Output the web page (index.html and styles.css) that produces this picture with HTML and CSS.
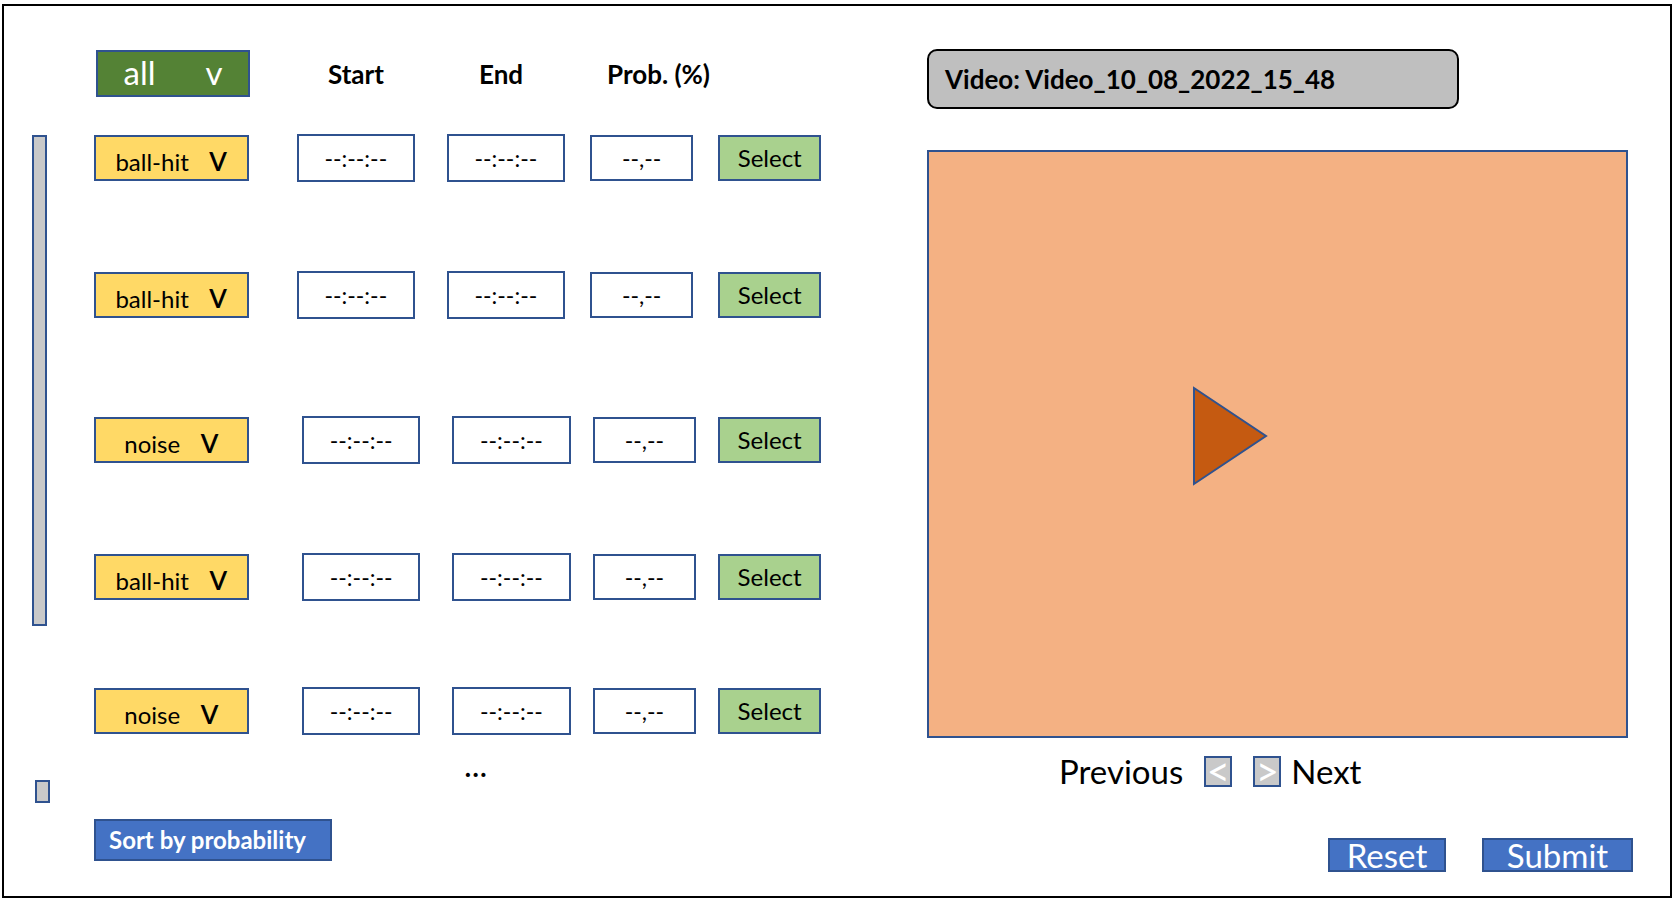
FILE: index.html
```html
<!DOCTYPE html>
<html lang="en">
<head>
<meta charset="utf-8">
<meta name="viewport" content="width=device-width, initial-scale=1">
<title>Video event review</title>
<link rel="stylesheet" href="styles.css">
</head>
<body>
<main class="frame">
  <div class="rail" aria-hidden="true">
    <div class="rail-thumb"></div>
    <div class="rail-end"></div>
  </div>

  <section class="events" aria-label="Detected events">
    <div class="events-head">
      <label class="picker picker-all"><select class="picker-select" aria-label="Event filter"><option selected>all</option><option>ball-hit</option><option>noise</option></select><span class="picker-arrow">v</span></label>
      <span class="head-start">Start</span>
      <span class="head-end">End</span>
      <span class="head-prob">Prob. (%)</span>
    </div>

    <div class="event-list">
      <div class="event">
        <label class="picker"><select class="picker-select" aria-label="Event type 1"><option selected>ball-hit</option><option>noise</option></select><span class="picker-arrow">v</span></label>
        <input class="field time" type="text" value="--:--:--" aria-label="Start 1">
        <input class="field time" type="text" value="--:--:--" aria-label="End 1">
        <input class="field prob" type="text" value="--,--" aria-label="Probability 1">
        <button class="select-button" type="button">Select</button>
      </div>
      <div class="event">
        <label class="picker"><select class="picker-select" aria-label="Event type 2"><option selected>ball-hit</option><option>noise</option></select><span class="picker-arrow">v</span></label>
        <input class="field time" type="text" value="--:--:--" aria-label="Start 2">
        <input class="field time" type="text" value="--:--:--" aria-label="End 2">
        <input class="field prob" type="text" value="--,--" aria-label="Probability 2">
        <button class="select-button" type="button">Select</button>
      </div>
      <div class="event event-shifted">
        <label class="picker"><select class="picker-select" aria-label="Event type 3"><option>ball-hit</option><option selected>noise</option></select><span class="picker-arrow">v</span></label>
        <input class="field time" type="text" value="--:--:--" aria-label="Start 3">
        <input class="field time" type="text" value="--:--:--" aria-label="End 3">
        <input class="field prob" type="text" value="--,--" aria-label="Probability 3">
        <button class="select-button" type="button">Select</button>
      </div>
      <div class="event event-shifted">
        <label class="picker"><select class="picker-select" aria-label="Event type 4"><option selected>ball-hit</option><option>noise</option></select><span class="picker-arrow">v</span></label>
        <input class="field time" type="text" value="--:--:--" aria-label="Start 4">
        <input class="field time" type="text" value="--:--:--" aria-label="End 4">
        <input class="field prob" type="text" value="--,--" aria-label="Probability 4">
        <button class="select-button" type="button">Select</button>
      </div>
      <div class="event event-shifted">
        <label class="picker"><select class="picker-select" aria-label="Event type 5"><option>ball-hit</option><option selected>noise</option></select><span class="picker-arrow">v</span></label>
        <input class="field time" type="text" value="--:--:--" aria-label="Start 5">
        <input class="field time" type="text" value="--:--:--" aria-label="End 5">
        <input class="field prob" type="text" value="--,--" aria-label="Probability 5">
        <button class="select-button" type="button">Select</button>
      </div>
    </div>

    <p class="more">...</p>
    <button class="sort-button" type="button">Sort by probability</button>
  </section>

  <section class="viewer" aria-label="Video">
    <h1 class="video-title">Video: Video_10_08_2022_15_48</h1>
    <div class="video">
      <button class="play" type="button" aria-label="Play">
        <svg class="play-icon" viewBox="0 0 76 100" aria-hidden="true"><path d="M2 2 L74 50 L2 98 Z"/></svg>
      </button>
    </div>
    <div class="pager">
      <label for="previous">Previous</label>
      <button class="step" id="previous" type="button">&lt;</button>
      <button class="step" id="next" type="button">&gt;</button>
      <label for="next">Next</label>
    </div>
    <div class="actions">
      <button class="action action-reset" type="button">Reset</button>
      <button class="action action-submit" type="button">Submit</button>
    </div>
  </section>
</main>
</body>
</html>
```
FILE: styles.css
```css
:root {
  --line: #2f528f;
  --blue: #4472c4;
  --grey: #c9c9c9;
}

* {
  box-sizing: border-box;
}

body {
  margin: 0;
  padding: 4px 3px 5px 2px;
  background: #fff;
  color: #000;
  font: 24px/28px Lato, Carlito, Calibri, sans-serif;
}

button,
input,
select {
  margin: 0;
  padding: 0;
  border-radius: 0;
  color: inherit;
  font: inherit;
}

.frame {
  display: grid;
  grid-template-columns: 62px minmax(0, 727fr) 106px minmax(0, 706fr);
  min-height: calc(100vh - 9px);
  padding: 0 37px 0 28px;
  border: 2px solid #000;
}

/* Scroll rail */
.rail {
  padding-top: 129px;
}

.rail-thumb,
.rail-end {
  width: 15px;
  border: 2px solid var(--line);
  background: var(--grey);
}

.rail-thumb {
  height: 491px;
}

.rail-end {
  height: 23px;
  margin: 154px 0 0 3px;
}

/* Event list */
.events {
  display: flex;
  flex-direction: column;
  align-items: stretch;
  padding-top: 44px;
}

.events-head {
  display: grid;
  grid-template-columns: 156fr 78fr 151fr 128fr 214fr;
  align-items: center;
  height: 47px;
  font-size: 26px;
  font-weight: 700;
}

.head-start {
  grid-column: 3;
}

.event-list {
  display: grid;
  grid-template-columns: minmax(0, 1fr);
  grid-template-rows: 137px 145px 137px 134px auto;
  align-items: start;
  margin-top: 37px;
}

.event {
  display: flex;
  align-items: center;
}

.picker {
  display: flex;
  flex: 156 1 0;
  align-items: baseline;
  justify-content: center;
  gap: 20px;
  min-width: 0;
  height: 46px;
  margin-right: 48px;
  border: 2px solid var(--line);
  background: #ffd966;
  line-height: 40px;
}

.picker-select {
  appearance: none;
  field-sizing: content;
  border: 0;
  background: transparent;
}

.picker-arrow {
  font-size: 36px;
}

.picker-all {
  gap: 50px;
  height: 47px;
  margin: 0 0 0 2px;
  background: #548235;
  color: #fff;
  font-size: 33px;
  font-weight: 400;
}

.picker-all .picker-arrow {
  font-size: 33px;
}

.field {
  min-width: 0;
  border: 2px solid var(--line);
  background: #fff;
  font-size: 23px;
  text-align: center;
}

.time {
  flex: 118 1 0;
  height: 48px;
}

.time + .time {
  margin-left: 32px;
}

.prob {
  flex: 103 1 0;
  height: 46px;
  margin: 0 25px;
}

.select-button {
  flex: 102 1 0;
  height: 46px;
  border: 2px solid var(--line);
  background: #a9d18e;
}

.event-shifted .picker {
  margin-right: 53px;
}

.event-shifted .prob {
  margin: 0 22px;
}

.more {
  height: 84px;
  margin: 0;
  padding: 11px 0 0 370px;
  font-size: 33px;
  line-height: 36px;
}

.sort-button {
  align-self: flex-start;
  height: 42px;
  padding: 0 24px 0 13px;
  border: 2px solid var(--line);
  background: var(--blue);
  color: #fff;
  font-weight: 700;
}

/* Video viewer */
.viewer {
  grid-column: 4;
  padding-top: 43px;
}

.video-title {
  max-width: 532px;
  margin: 0;
  padding: 14px 16px;
  border: 2px solid #000;
  border-radius: 10px;
  background: #bfbfbf;
  font-size: 26px;
  font-weight: 700;
  line-height: 28px;
}

.video {
  position: relative;
  aspect-ratio: 701 / 588;
  margin: 41px 5px 0 0;
  border: 2px solid var(--line);
  background: #f4b183;
}

.play {
  position: absolute;
  top: 40%;
  left: calc(38% - 2px);
  width: 76px;
  height: 100px;
  border: 0;
  background: transparent;
}

.play-icon {
  display: block;
  fill: #c55a11;
  stroke: var(--line);
  stroke-width: 2;
}

.pager {
  display: flex;
  align-items: center;
  margin-top: 17px;
  padding-left: 132px;
  font-size: 33px;
  line-height: 32px;
}

.step {
  display: flex;
  align-items: center;
  justify-content: center;
  width: 28px;
  height: 31px;
  margin-left: 21px;
  border: 2px solid var(--line);
  background: var(--grey);
  color: #fff;
  font-size: 40px;
  line-height: 24px;
}

.step + label {
  margin-left: 10px;
}

.actions {
  display: flex;
  justify-content: flex-end;
  gap: 36px;
  margin-top: 51px;
}

.action {
  height: 34px;
  border: 2px solid var(--line);
  background: var(--blue);
  color: #fff;
  font-size: 33px;
  line-height: 30px;
}

.action-reset {
  width: 118px;
}

.action-submit {
  width: 151px;
}
```
